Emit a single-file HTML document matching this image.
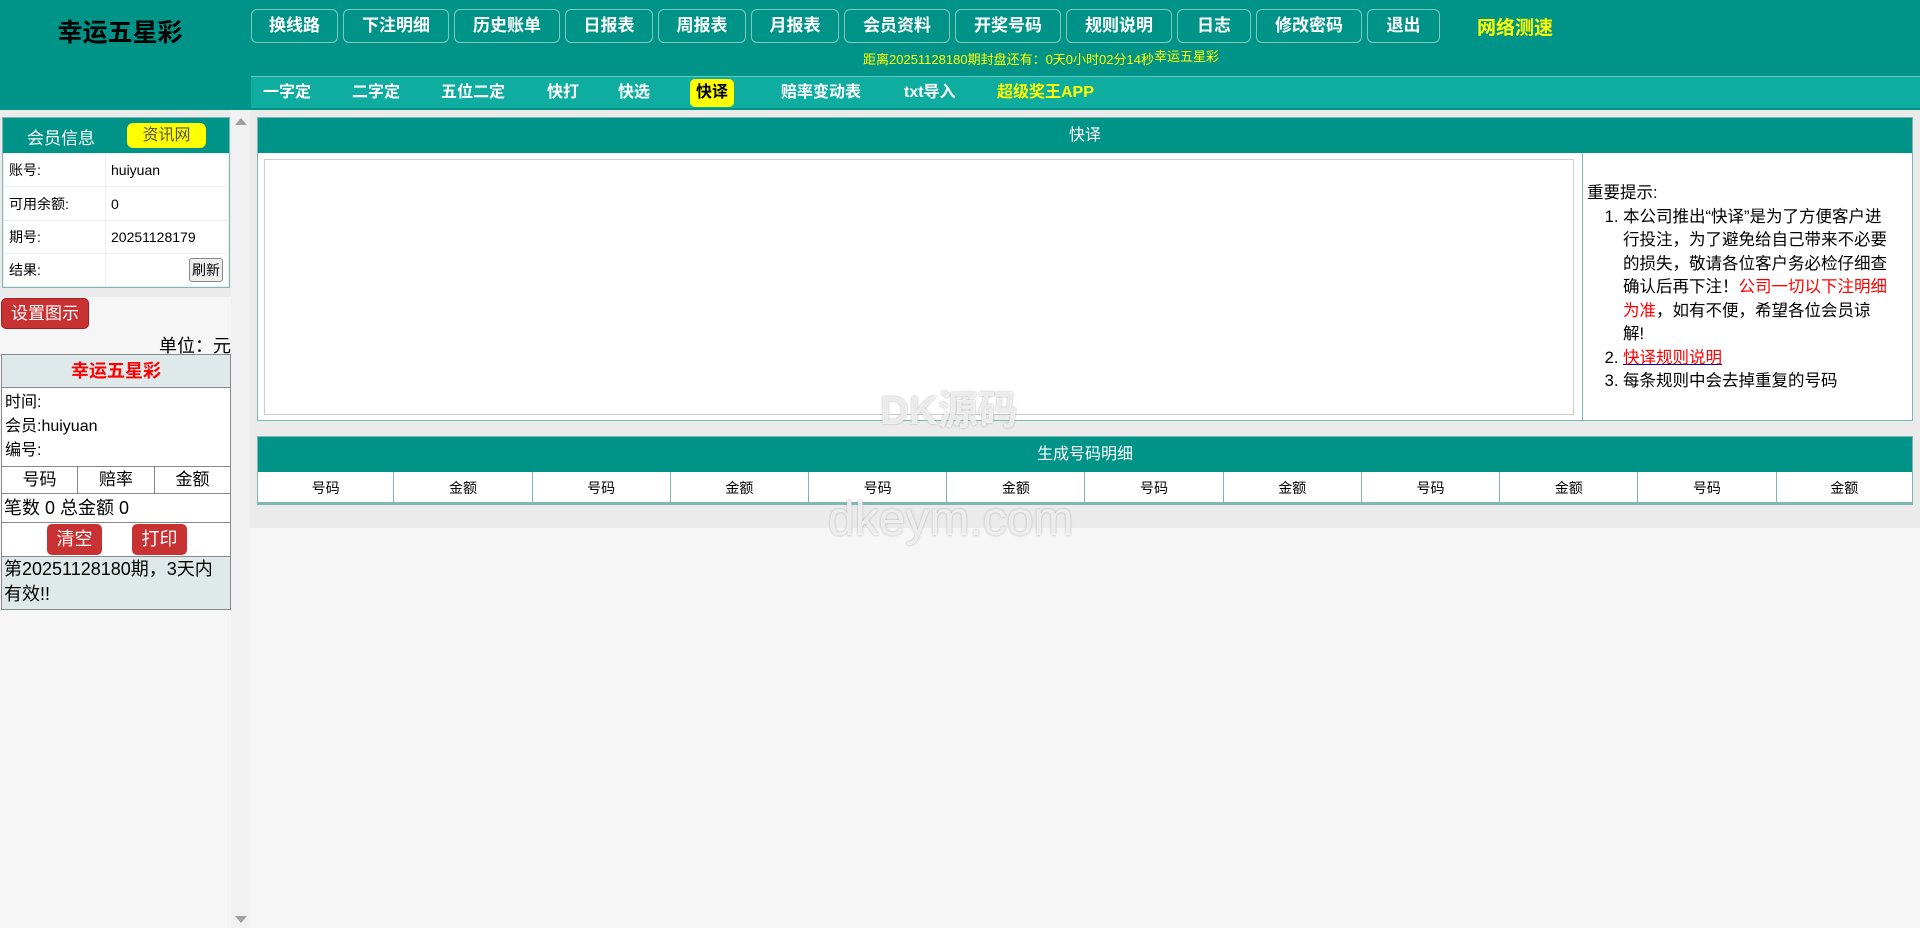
<!DOCTYPE html>
<html><head><meta charset="utf-8"><style>
*{margin:0;padding:0;box-sizing:border-box}
body{width:1920px;height:928px;background:#f6f6f6;font-family:"Liberation Sans","Noto Sans CJK SC",sans-serif;font-size:14px;position:relative;overflow:hidden}
.hdr{position:absolute;left:0;top:0;width:1920px;height:110px;background:#009488}
.title{position:absolute;left:40px;top:13px;width:160px;text-align:center;font-size:25px;font-weight:bold;color:#000}
.btn{position:absolute;top:9px;height:34px;border:1px solid #7fc8c0;border-radius:6px;color:#fff;font-weight:bold;font-size:17px;line-height:32px;text-align:center}
.cd{position:absolute;left:863px;top:49px;color:#ff0;font-size:13px}
.sub{position:absolute;left:251px;top:76px;width:1669px;height:32px;background:#0eada0;border-top:1px solid #6cc7be}
.sub span{position:absolute;top:4px;color:#fff;font-weight:bold;font-size:16px;line-height:24px}
.grey{position:absolute;left:250px;top:110px;width:1670px;height:418px;background:#ebebeb}
.lp{position:absolute;left:0;top:110px;width:231px;height:818px;background:#f6f6f6}
.sb{position:absolute;left:231px;top:110px;width:19px;height:818px;background:#f1f1f1}
table{border-collapse:collapse}
</style></head><body>
<div class="hdr"></div>
<div class="title">幸运五星彩</div>
<div class="btn" style="left:251px;width:87px">换线路</div>
<div class="btn" style="left:343px;width:106px">下注明细</div>
<div class="btn" style="left:454px;width:106px">历史账单</div>
<div class="btn" style="left:565px;width:88px">日报表</div>
<div class="btn" style="left:658px;width:88px">周报表</div>
<div class="btn" style="left:751px;width:88px">月报表</div>
<div class="btn" style="left:844px;width:106px">会员资料</div>
<div class="btn" style="left:955px;width:106px">开奖号码</div>
<div class="btn" style="left:1066px;width:106px">规则说明</div>
<div class="btn" style="left:1177px;width:74px">日志</div>
<div class="btn" style="left:1256px;width:106px">修改密码</div>
<div class="btn" style="left:1367px;width:73px">退出</div>
<div style="position:absolute;left:1477px;top:13px;color:#ff0;font-weight:bold;font-size:19px">网络测速</div>
<div class="cd">距离20251128180期封盘还有：0天0小时02分14秒<span style="position:relative;top:-3px">幸运五星彩</span></div>
<div class="sub">
<span style="left:12px">一字定</span><span style="left:101px">二字定</span><span style="left:190px">五位二定</span><span style="left:296px">快打</span><span style="left:367px">快选</span>
<span style="left:439px;top:2px;background:#ff0;color:#000;border-radius:5px;padding:2px 6px">快译</span>
<span style="left:530px">赔率变动表</span><span style="left:653px">txt导入</span><span style="left:746px;color:#ff0">超级奖王APP</span>
</div>
<div class="grey"></div>
<div class="lp">
 <div style="position:absolute;left:0;top:0;width:231px;height:187px;background:#ebebeb"></div>
 <div style="position:absolute;left:2px;top:7px;width:228px;border:1px solid #7fb8b2;background:#fff">
  <div style="height:35px;background:#009488;position:relative">
   <span style="position:absolute;left:24px;top:6px;color:#fff;font-size:17px">会员信息</span>
   <span style="position:absolute;left:124px;top:5px;width:79px;height:25px;background:#ff0;border-radius:6px;text-align:center;line-height:25px;color:#555;font-size:16px">资讯网</span>
  </div>
  <table style="width:100%;font-size:14px">
   <tr style="height:33px"><td style="width:102px;padding-left:5px;border:1px solid #eee">账号:</td><td style="padding-left:5px;border:1px solid #eee">huiyuan</td></tr>
   <tr style="height:34px"><td style="padding-left:5px;border:1px solid #eee">可用余额:</td><td style="padding-left:5px;border:1px solid #eee">0</td></tr>
   <tr style="height:33px"><td style="padding-left:5px;border:1px solid #eee">期号:</td><td style="padding-left:5px;border:1px solid #eee">20251128179</td></tr>
   <tr style="height:33px"><td style="padding-left:5px;border:1px solid #eee">结果:</td><td style="text-align:right;padding-right:5px;border:1px solid #eee"><span style="display:inline-block;border:1px solid #888;border-radius:3px;background:#eee;font-size:14px;padding:1px 2px">刷新</span></td></tr>
  </table>
 </div>
 <div style="position:absolute;left:1px;top:188px;width:88px;height:31px;background:#c83232;border:1px solid #a02020;border-radius:5px;color:#fff;font-size:17px;text-align:center;line-height:29px">设置图示</div>
 <div style="position:absolute;right:0;top:222px;font-size:18px">单位：元</div>
 <div style="position:absolute;left:1px;top:244px;width:230px;height:256px;border:1px solid #888;background:#fff">
  <div style="height:33px;background:#dfe9e9;border-bottom:1px solid #888;text-align:center;color:#f00;font-weight:bold;font-size:18px;line-height:33px">幸运五星彩</div>
  <div style="height:78px;padding:3px 3px;font-size:16px;line-height:24px">时间:<br>会员:huiyuan<br>编号:</div>
  <div style="height:28px;border-top:1px solid #888;border-bottom:1px solid #888;display:flex;font-size:17px;line-height:26px;text-align:center"><div style="width:76px;border-right:1px solid #888">号码</div><div style="width:77px;border-right:1px solid #888">赔率</div><div style="flex:1">金额</div></div>
  <div style="height:29px;border-bottom:1px solid #888;font-size:18px;padding-left:2px;line-height:28px">笔数 0 总金额 0</div>
  <div style="height:34px;border-bottom:1px solid #888;position:relative">
   <span style="position:absolute;left:45px;top:1px;width:55px;height:31px;background:#c83232;border-radius:5px;color:#fff;font-size:18px;text-align:center;line-height:30px">清空</span>
   <span style="position:absolute;left:130px;top:1px;width:55px;height:31px;background:#c83232;border-radius:5px;color:#fff;font-size:18px;text-align:center;line-height:30px">打印</span>
  </div>
  <div style="background:#dfe9e9;font-size:18px;line-height:25px;padding-left:2px;height:52px">第20251128180期，3天内有效!!</div>
 </div>
</div>
<div class="sb"><div style="position:absolute;left:4px;top:8px;border:6px solid transparent;border-bottom:7px solid #a0a0a0;border-top:0"></div><div style="position:absolute;left:4px;top:806px;border:6px solid transparent;border-top:7px solid #a0a0a0;border-bottom:0"></div></div>
<div style="position:absolute;left:257px;top:117px;width:1656px;height:304px;border:1px solid #7fb8b2;background:#fff">
 <div style="height:35px;background:#009488;color:#fff;text-align:center;line-height:35px;font-size:16px">快译</div>
 <div style="position:absolute;left:6px;top:41px;width:1310px;height:256px;border:1px solid #ccc"></div>
 <div style="position:absolute;left:1324px;top:35px;width:1px;height:267px;background:#7fb8b2"></div>
 <div style="position:absolute;left:1329px;top:64px;width:330px;font-size:16.5px;line-height:23.5px;white-space:nowrap">重要提示:
  <ol style="padding-left:36px">
   <li>本公司推出“快译”是为了方便客户进<br>行投注，为了避免给自己带来不必要<br>的损失，敬请各位客户务必检仔细查<br>确认后再下注！<span style="color:#f00">公司一切以下注明细<br>为准</span>，如有不便，希望各位会员谅<br>解!</li>
   <li><span style="color:#f00;text-decoration:underline;text-decoration-color:#00a">快译规则说明</span></li>
   <li>每条规则中会去掉重复的号码</li>
  </ol>
 </div>
</div>
<div style="position:absolute;left:257px;top:436px;width:1656px;height:69px;border:1px solid #7fb8b2;border-bottom:3px solid #7fb8b2;background:#fff">
 <div style="height:35px;background:#009488;color:#fff;text-align:center;line-height:35px;font-size:16px">生成号码明细</div>
 <table style="width:100%;font-size:14px;text-align:center"><tr style="height:31px">
 <td style="border-right:1px solid #7fb8b2">号码</td><td style="border-right:1px solid #7fb8b2">金额</td><td style="border-right:1px solid #7fb8b2">号码</td><td style="border-right:1px solid #7fb8b2">金额</td><td style="border-right:1px solid #7fb8b2">号码</td><td style="border-right:1px solid #7fb8b2">金额</td><td style="border-right:1px solid #7fb8b2">号码</td><td style="border-right:1px solid #7fb8b2">金额</td><td style="border-right:1px solid #7fb8b2">号码</td><td style="border-right:1px solid #7fb8b2">金额</td><td style="border-right:1px solid #7fb8b2">号码</td><td>金额</td></tr></table>
</div>
<div style="position:absolute;left:880px;top:378px;font-size:40px;color:rgba(255,255,255,.75);font-weight:bold;text-shadow:0 0 2px #aaa">DK源码</div>
<div style="position:absolute;left:828px;top:492px;font-size:48px;color:rgba(255,255,255,.75);text-shadow:0 0 2px #aaa">dkeym.com</div>
</body></html>
